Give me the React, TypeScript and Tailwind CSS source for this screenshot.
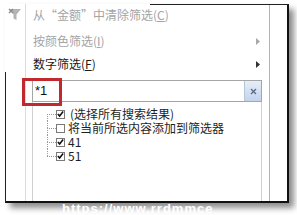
import React from "react";

const cjk = { fontFamily: "'Noto Sans CJK SC', 'Noto Sans', sans-serif" };

function Arrow({ color }: { color: string }) {
  return (
    <svg width="4" height="7" viewBox="0 0 4 7">
      <polygon points="0,0 4,3.5 0,7" fill={color} />
    </svg>
  );
}

function Check({ checked }: { checked: boolean }) {
  return (
    <div className="w-[9px] h-[9px] border border-[#7a7a7a] bg-white flex items-center justify-center shrink-0">
      {checked && (
        <svg width="8" height="8" viewBox="0 0 8 8">
          <path d="M1 4 L3 6.2 L7 1.2" fill="none" stroke="#111" strokeWidth="1.8" />
        </svg>
      )}
    </div>
  );
}

function Row({
  label,
  checked,
  first,
  last,
  indent,
}: {
  label: string;
  checked: boolean;
  first?: boolean;
  last?: boolean;
  indent?: boolean;
}) {
  return (
    <div className="flex items-stretch h-[14px] text-[12px] leading-[14px]">
      <div className="w-[14px] shrink-0" />
      <div className="w-[9px] flex flex-col shrink-0">
        <div className={"flex-1 " + (first ? "" : "border-l border-dotted border-[#9a9a9a]")} />
        <div className={"flex-1 border-t border-dotted border-[#9a9a9a] " + (last ? "" : "border-l")} />
      </div>
      <div className="flex items-center">
        <Check checked={checked} />
        <span
          className={"whitespace-nowrap text-[#1e1e1e] " + (indent ? "ml-[5px]" : "ml-[3px]")}
          style={{ ...cjk, fontSize: "12px" }}
        >
          {label}
        </span>
      </div>
    </div>
  );
}

export default function App() {
  return (
    <div className="w-[297px] h-[215px] bg-white overflow-hidden relative pl-[5px] pt-[4px]" style={cjk}>
      <div className="relative w-[284px] h-[199px] flex border-r-2 border-b-2 border-[#111] shadow-[5px_5px_6px_rgba(0,0,0,0.45)] bg-white">
        {/* left icon column */}
        <div className="w-[21px] border-r border-[#dcdcdc] flex flex-col items-center pt-[4px]">
          <svg width="14" height="14" viewBox="0 0 14 14">
            <path d="M1 1 H13 L8.5 6.5 V12 L5.5 10.5 V6.5 Z" fill="#b4b4b4" />
            <path d="M1 1 L5 5 M5 1 L1 5" stroke="#8c8c8c" strokeWidth="1.4" />
          </svg>
        </div>
        {/* main column */}
        <div className="flex-1 flex flex-col">
          <div className="h-[22px] flex items-center pl-[7px] text-[12px] text-[#a4a4a4] whitespace-nowrap">
            <span>从“金额”中清除筛选(<span className="underline">C</span>)</span>
          </div>
          <div className="h-[4px]" />
          <div className="h-[22px] flex items-center justify-between pl-[7px] pr-[9px] text-[12px] text-[#a4a4a4]">
            <span>按颜色筛选(<span className="underline">I</span>)</span>
            <Arrow color="#a8a8a8" />
          </div>
          <div className="h-[24px] flex items-center justify-between pl-[7px] pr-[9px] text-[12px] text-[#1a1a1a]">
            <span>数字筛选(<span className="underline">F</span>)</span>
            <Arrow color="#333" />
          </div>
          <div className="mt-[4px] ml-[6px] w-[230px] h-[22px] border border-[#a6a6a6] flex items-stretch bg-white">
            <div className="flex-1 flex items-center pl-[2px] text-[13px] text-[#111]" style={{ fontFamily: "'Liberation Sans', Arial, sans-serif" }}>
              *1
            </div>
            <div className="w-[17px] border-l border-[#b8c6da] bg-gradient-to-b from-[#e6eef9] to-[#c3d3ec] flex items-center justify-center">
              <svg width="7" height="7" viewBox="0 0 7 7">
                <path d="M1 1 L6 6 M6 1 L1 6" stroke="#5a6a80" strokeWidth="1.3" />
              </svg>
            </div>
          </div>
          <div className="ml-[6px] w-[230px] flex-1 border-l border-r border-[#d0d0d0] pt-[5px] flex flex-col">
            <Row label="(选择所有搜索结果)" checked first indent />
            <Row label="将当前所选内容添加到筛选器" checked={false} />
            <Row label="41" checked />
            <Row label="51" checked last />
          </div>
        </div>
        {/* right column */}
        <div className="w-[18px] border-l border-[#b4b4b4]" />
        {/* partial top edge */}
        <div className="absolute top-0 left-[145px] right-[-2px] h-[1px] bg-[#222]" />
        {/* partial left edge */}
        <div className="absolute left-0 top-[68px] bottom-[-2px] w-[1px] bg-[#222]" />
        {/* red highlight */}
        <div className="absolute left-[17px] top-[74px] w-[40px] h-[28px] border-[3px] border-[#c02a2f]" />
      </div>
      <div
        className="absolute left-[62px] top-[202px] text-[13px] font-bold text-white tracking-[1px] leading-none"
        style={{ fontFamily: "'Liberation Sans', Arial, sans-serif" }}
      >
        https://www.rrdmmce
      </div>
    </div>
  );
}
